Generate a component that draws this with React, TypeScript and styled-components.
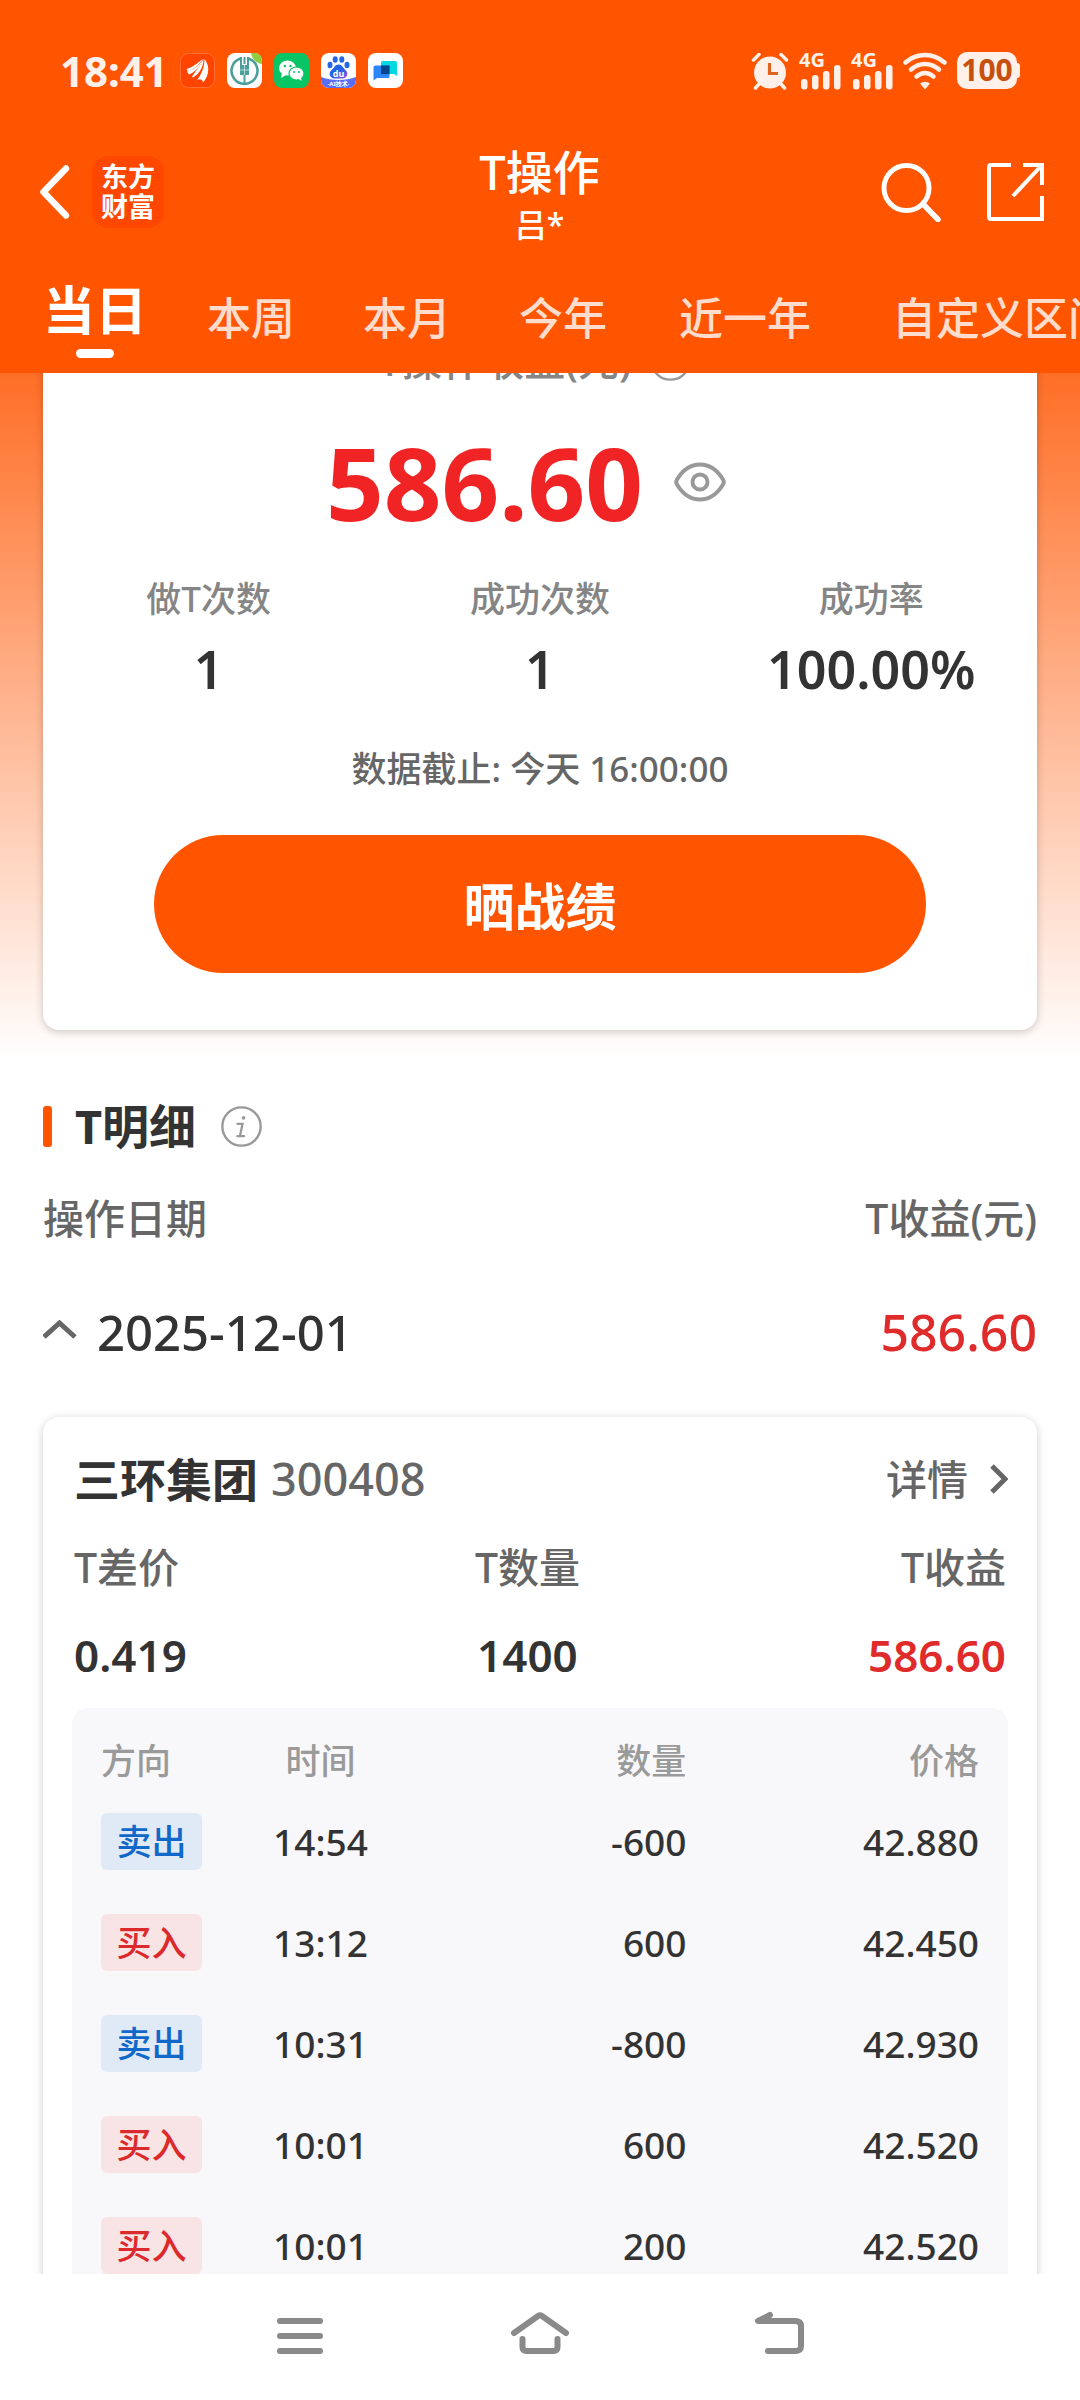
import React, { useLayoutEffect, useRef, useState } from "react";
import styled, { createGlobalStyle, css } from "styled-components";

const color = {
  brand: "#ff5500",
  ink: "#333333",
  mid: "#666666",
  soft: "#858585",
  faint: "#9a9a9a",
  rise: "#e02b2b",
  line: "#8a8a8a",
};

const GlobalStyle = createGlobalStyle`
  *, *::before, *::after { box-sizing: border-box; }
  body {
    margin: 0;
    background: #ffffff;
    color: ${color.ink};
    font-family: "Noto Sans", "Noto Sans CJK SC", sans-serif;
    font-weight: 500;
  }
  button {
    padding: 0;
    border: 0;
    background: none;
    color: inherit;
    font: inherit;
    cursor: pointer;
  }
  h1, h2, h3, p, dl, dd { margin: 0; font: inherit; }
  svg { display: block; flex: none; }
`;

const Screen = styled.div`
  display: flex;
  flex-direction: column;
  height: 100vh;
  overflow: hidden;
`;

/* ---------- header ---------- */

const Header = styled.header`
  flex: none;
  background: ${color.brand};
  color: #ffffff;
`;

const StatusBar = styled.div`
  display: flex;
  align-items: center;
  justify-content: space-between;
  height: 139px;
  padding: 2px 60px 0;
`;

const StatusGroup = styled.div<{ $gap: number }>`
  display: flex;
  align-items: center;
  gap: ${(p) => p.$gap}px;
`;

const Clock = styled.span`
  color: #fff1ea;
  font-size: 42px;
  font-weight: 700;
  line-height: 44px;
`;

const Battery = styled.span`
  position: relative;
  width: 60px;
  height: 37px;
  margin-right: 3px;
  border-radius: 10px;
  background: #fff1ea;
  color: #c8500f;
  font-size: 30px;
  font-weight: 700;
  line-height: 36px;
  text-align: center;

  &::after {
    content: "";
    position: absolute;
    top: 11px;
    right: -3px;
    width: 4px;
    height: 15px;
    border-radius: 0 3px 3px 0;
    background: #fff1ea;
  }
`;

const NavBar = styled.div`
  display: flex;
  align-items: center;
  padding: 0 35px 0 40px;
`;

const NavSide = styled.div<{ $end?: boolean }>`
  display: flex;
  flex: 1;
  align-items: center;
  justify-content: ${(p) => (p.$end ? "flex-end" : "flex-start")};
  gap: ${(p) => (p.$end ? 46 : 22)}px;
`;

const BrandMark = styled.span`
  display: grid;
  place-content: center;
  width: 72px;
  height: 72px;
  border-radius: 16px;
  background: #ff4700;
  font-size: 27px;
  font-weight: 700;
  line-height: 30px;
`;

const NavTitle = styled.div`
  margin-right: 6px;
  text-align: center;
`;

const Title = styled.h1`
  font-size: 47px;
  line-height: 66px;
`;

const Account = styled.p`
  font-size: 32px;
  line-height: 40px;
`;

const TabList = styled.nav`
  display: flex;
  align-items: flex-start;
  height: 128px;
  padding: 35px 0 0 43px;
  overflow: hidden;
`;

const Tab = styled.button<{ $active: boolean; $pad: number }>`
  flex: none;
  padding: 0 ${(p) => p.$pad}px;
  color: #ffdccb;
  font-size: 44px;
  line-height: 76px;
  white-space: nowrap;

  ${(p) =>
    p.$active &&
    css`
      padding: 0 26px 0 0;
      color: #ffffff;
      font-size: 52px;
      font-weight: 700;
      line-height: 60px;
    `}
`;

const TabLabel = styled.span<{ $active: boolean }>`
  display: flex;
  flex-direction: column;
  align-items: center;

  ${(p) =>
    p.$active &&
    css`
      &::after {
        content: "";
        width: 38px;
        height: 9px;
        margin-top: 9px;
        border-radius: 5px;
        background: #ffffff;
      }
    `}
`;

/* ---------- scrolling content ---------- */

const Content = styled.main`
  flex: 1;
  min-height: 0;
  overflow-y: auto;
  scrollbar-width: none;
`;

const Hero = styled.section`
  padding: 40px 43px 30px;
  background: linear-gradient(${color.brand}, #ffffff);
`;

const Card = styled.div`
  border-radius: 16px;
  background: #ffffff;
  box-shadow: 0 2px 8px rgba(0, 0, 0, 0.2);
`;

const SummaryCard = styled(Card)`
  padding: 39px 0 57px;
`;

const Caption = styled.div`
  display: flex;
  align-items: center;
  justify-content: center;
  gap: 18px;
  padding-right: 11px;
  color: ${color.soft};
  font-size: 41px;
  line-height: 56px;
`;

const Total = styled.div`
  display: flex;
  align-items: center;
  justify-content: center;
  gap: 31px;
  margin-top: 44px;
  padding-right: 28px;
  color: #f02424;
  font-size: 101px;
  font-weight: 700;
  line-height: 100px;
`;

const Stats = styled.dl`
  display: grid;
  grid-template-columns: repeat(3, 1fr);
  margin-top: 47px;
  text-align: center;
`;

const StatLabel = styled.dt`
  color: ${color.soft};
  font-size: 35px;
  line-height: 40px;
`;

const StatValue = styled.dd`
  margin-top: 20px;
  font-size: 52px;
  font-weight: 600;
  line-height: 60px;
`;

const AsOf = styled.p`
  margin-top: 50px;
  color: ${color.mid};
  font-size: 35px;
  line-height: 40px;
  text-align: center;
`;

const ShareButton = styled.button`
  display: block;
  width: calc(100% - 222px);
  height: 138px;
  margin: 46px auto 0;
  border-radius: 69px;
  background: ${color.brand};
  color: #ffffff;
  font-size: 51px;
  font-weight: 700;
`;

const Details = styled.section`
  padding: 36px 43px 100px;
`;

const SectionTitle = styled.div`
  display: flex;
  align-items: center;
  line-height: 60px;

  &::before {
    content: "";
    width: 9px;
    height: 41px;
    margin-right: 23px;
    border-radius: 3px;
    background: ${color.brand};
  }
`;

const SectionName = styled.h2`
  margin-right: 25px;
  font-size: 47px;
  font-weight: 700;
`;

const Row = styled.div<{ $top: number }>`
  display: flex;
  align-items: center;
  justify-content: space-between;
  width: 100%;
  margin-top: ${(p) => p.$top}px;
  line-height: 60px;
`;

const HeadText = styled.span`
  color: ${color.mid};
  font-size: 41px;
`;

const DayToggle = styled.button`
  display: flex;
  align-items: center;
  gap: 20px;
  font-size: 49px;
  line-height: 60px;
`;

const DayProfit = styled.span`
  color: ${color.rise};
  font-size: 50px;
`;

const StockCard = styled(Card)`
  margin-top: 55px;
  padding: 32px 29px;
  box-shadow: 0 2px 10px rgba(0, 0, 0, 0.2);
`;

const StockHead = styled.div`
  display: flex;
  align-items: center;
  padding-left: 2px;
  line-height: 60px;
`;

const StockName = styled.h3`
  font-size: 46px;
  font-weight: 700;
`;

const StockCode = styled.span`
  margin-left: 13px;
  color: ${color.mid};
  font-size: 45px;
`;

const DetailLink = styled.a`
  display: flex;
  align-items: center;
  gap: 22px;
  margin-left: auto;
  color: ${color.mid};
  font-size: 41px;
  text-decoration: none;
`;

const Metrics = styled.dl`
  display: flex;
  justify-content: space-between;
  margin-top: 28px;
  padding: 0 2px;
  line-height: 60px;
`;

const Metric = styled.div<{ $align: string }>`
  text-align: ${(p) => p.$align};
`;

const MetricLabel = styled.dt`
  color: ${color.mid};
  font-size: 41px;
`;

const MetricValue = styled.dd<{ $rise?: boolean }>`
  margin-top: 28px;
  color: ${(p) => (p.$rise ? color.rise : color.ink)};
  font-size: 44px;
  font-weight: 600;
`;

const Trades = styled.div`
  margin-top: 23px;
  padding: 22px 29px;
  border-radius: 16px;
  background: #f8f8fb;
`;

const TradeTable = styled.table`
  width: 100%;
  border-collapse: collapse;
  table-layout: fixed;
`;

const Col = styled.col<{ $width: string }>`
  width: ${(p) => p.$width};
`;

const Th = styled.th<{ $align: string }>`
  height: 61px;
  padding: 0;
  color: ${color.faint};
  font-size: 35px;
  font-weight: 500;
  line-height: 50px;
  text-align: ${(p) => p.$align};
`;

const Td = styled.td<{ $align: string }>`
  height: 101px;
  padding: 0;
  font-size: 37px;
  line-height: 50px;
  text-align: ${(p) => p.$align};
`;

const SideTag = styled.span<{ $sell: boolean }>`
  display: block;
  width: 101px;
  border-radius: 6px;
  background: ${(p) => (p.$sell ? "#e0eaf6" : "#f9e4e5")};
  color: ${(p) => (p.$sell ? "#1168c9" : "#dc2a2c")};
  font-size: 35px;
  line-height: 57px;
  text-align: center;
`;

/* ---------- system navigation ---------- */

const SystemBar = styled.footer`
  display: flex;
  flex: none;
  align-items: center;
  justify-content: center;
  gap: 180px;
  height: 126px;
  background: #ffffff;
`;

const SystemKey = styled.button`
  width: 60px;
  height: 60px;
`;

/* ---------- drawings ---------- */

const pale = "#fff1ea";

const FundIcon = () => (
  <svg width="35" height="35" viewBox="0 0 35 35" aria-hidden="true">
    <rect x="0.5" y="0.5" width="34" height="34" rx="8" fill="#ff4400" stroke="#ff7038" />
    <path d="M6.500 16C13 14.500 18 9.500 23 6 19 11 14 16.500 8 18.500Z" fill="#fff" />
    <path d="M12 23.500C16 18 20.500 12 23.500 6 23.500 13 20 20.500 13 24.500Z" fill="#fff" />
    <path d="M17 27C22 21 24.500 13 24.500 6 29.500 12 30 22 23 29.500 22.500 26 19.500 25.500 17 27Z" fill="#fff" />
    <path d="M7 18.500C14 17 19 12 23 6.500 19.500 14 15 19 9 21.500Z" fill="#fff" />
  </svg>
);

const BankIcon = () => (
  <svg width="35" height="35" viewBox="0 0 35 35" aria-hidden="true">
    <defs>
      <clipPath id="bank-tile">
        <rect width="35" height="35" rx="8" />
      </clipPath>
    </defs>
    <g clipPath="url(#bank-tile)">
      <rect width="35" height="35" fill="#fff" />
      <path d="M24 0H35V11C29 10 25 6 24 0Z" fill="#8fce3c" />
      <path d="M13.500 5.500A13 13 0 1 0 21.500 5.500" fill="none" stroke="#4c9f9b" strokeWidth="2.600" />
      <path d="M17.500 4V11M17.500 21V31M14 4V13M21 4V13" stroke="#4c9f9b" strokeWidth="2" />
      <rect x="13" y="12" width="9" height="10" fill="#4c9f9b" />
      <path d="M13 17H22M17.500 12V22" stroke="#cfe6e4" strokeWidth="0.800" />
    </g>
  </svg>
);

const ChatIcon = () => (
  <svg width="35" height="35" viewBox="0 0 35 35" aria-hidden="true">
    <rect width="35" height="35" rx="8" fill="#07c565" />
    <ellipse cx="13.500" cy="15" rx="8.500" ry="7.500" fill="#fff" />
    <path d="M8 20L7 25L12 22Z" fill="#fff" />
    <ellipse cx="22.500" cy="20.500" rx="7.500" ry="6.500" fill="#fff" stroke="#07c565" strokeWidth="1.200" />
    <path d="M24 25.500L27.500 28L27 24Z" fill="#fff" />
    <g fill="#07c565">
      <circle cx="10.800" cy="13" r="1.200" />
      <circle cx="16.500" cy="13" r="1.200" />
      <circle cx="20" cy="19" r="1" />
      <circle cx="25" cy="19" r="1" />
    </g>
  </svg>
);

const PawIcon = () => (
  <svg width="35" height="35" viewBox="0 0 35 35" aria-hidden="true">
    <defs>
      <clipPath id="paw-tile">
        <rect width="35" height="35" rx="8" />
      </clipPath>
      <linearGradient id="paw-pad" x1="0" y1="0" x2="1" y2="1">
        <stop offset="0.500" stopColor="#2563e8" />
        <stop offset="1" stopColor="#a04be0" />
      </linearGradient>
    </defs>
    <g clipPath="url(#paw-tile)">
      <rect width="35" height="35" fill="#fff" />
      <g fill="#2566e4">
        <ellipse cx="9" cy="12" rx="2.500" ry="3.200" />
        <ellipse cx="14.200" cy="6.500" rx="2.500" ry="3.300" />
        <ellipse cx="20.800" cy="6.500" rx="2.500" ry="3.300" />
        <ellipse cx="26" cy="12" rx="2.500" ry="3.200" />
      </g>
      <path d="M17.500 11.500C21 11.500 22 15 24.500 17 28 20 26 25.500 21.500 25.500H13.500C9 25.500 7 20 10.500 17 13 15 14 11.500 17.500 11.500Z" fill="url(#paw-pad)" />
      <path d="M0 24C10 28 25 28 35 24V35H0Z" fill="#5b6df5" />
      <text x="17.500" y="23.500" fill="#fff" fontSize="9" fontWeight="700" textAnchor="middle">du</text>
      <text x="17.500" y="33" fill="#fff" fontSize="6" fontWeight="700" textAnchor="middle">·AI技术·</text>
    </g>
  </svg>
);

const BubblesIcon = () => (
  <svg width="35" height="35" viewBox="0 0 35 35" aria-hidden="true">
    <rect width="35" height="35" rx="8" fill="#fff" />
    <path d="M15 8H27.500Q29 8 29 9.500V23L26 21H13V10Q13 8 15 8Z" fill="#00d8e0" />
    <path d="M7.500 12.500H21.500V23.500Q21.500 25 20 25H9L5.500 27.500V14.500Q5.500 12.500 7.500 12.500Z" fill="#2b86fb" />
    <rect x="13" y="12.500" width="8.500" height="8.500" fill="#02468f" />
  </svg>
);

const AlarmIcon = () => (
  <svg width="38" height="38" viewBox="0 0 38 38" aria-hidden="true">
    <circle cx="19" cy="20.500" r="16" fill={pale} />
    <path d="M2.500 8L8 2.500M35.500 8L30 2.500M8 32L4.500 36M30 32L33.500 36" stroke={pale} strokeWidth="3.500" strokeLinecap="round" />
    <path d="M18.500 11V21.500H27" fill="none" stroke="#e0631f" strokeWidth="3.200" />
  </svg>
);

const SignalIcon = () => (
  <svg width="42" height="54" viewBox="0 -8 42 54" aria-hidden="true">
    <text x="0" y="15" fill={pale} fontSize="20" fontWeight="700">4G</text>
    <g fill={pale}>
      <rect x="2" y="27" width="6.500" height="10.500" rx="3" />
      <rect x="13" y="23" width="6.500" height="14.500" rx="3" />
      <rect x="24" y="19" width="6.500" height="18.500" rx="3" />
      <rect x="35" y="13" width="6.500" height="24.500" rx="3" />
    </g>
  </svg>
);

const WifiIcon = () => (
  <svg width="44" height="38" viewBox="0 0 44 38" aria-hidden="true">
    <g fill="none" stroke={pale} strokeWidth="4.500" strokeLinecap="round">
      <path d="M2.500 10.500C14 0.500 30 0.500 41.500 10.500" />
      <path d="M8 17.500C16.500 10 27.500 10 36 17.500" />
      <path d="M13.500 24.500C19 20 25 20 30.500 24.500" />
    </g>
    <path d="M22 37.500L17 31.500Q22 28 27 31.500Z" fill={pale} />
  </svg>
);

const BackIcon = () => (
  <svg width="30" height="54" viewBox="0 0 30 54" aria-hidden="true">
    <path d="M26 3.500L3.500 27L26 50.500" fill="none" stroke="#fff" strokeWidth="6.500" strokeLinecap="round" strokeLinejoin="round" />
  </svg>
);

const SearchIcon = () => (
  <svg width="60" height="60" viewBox="0 0 60 60" aria-hidden="true">
    <circle cx="25.500" cy="26" r="22.500" fill="none" stroke="#fff" strokeWidth="5" />
    <path d="M42 42L57 57.500" stroke="#fff" strokeWidth="5.500" strokeLinecap="round" />
  </svg>
);

const ExportIcon = () => (
  <svg width="58" height="60" viewBox="0 0 58 60" aria-hidden="true">
    <path d="M24 3H4Q2 3 2 5V55Q2 57 4 57H55V34" fill="none" stroke="#fff" strokeWidth="4" />
    <path d="M36 3H55V23M55 3L26 34" fill="none" stroke="#fff" strokeWidth="4" />
  </svg>
);

const EyeIcon = () => (
  <svg width="52" height="40" viewBox="0 0 52 40" aria-hidden="true">
    <path d="M3 17.500C15 -2.500 37 -2.500 49 17.500Q50.500 20 49 22.500C37 42.500 15 42.500 3 22.500Q1.500 20 3 17.500Z" fill="none" stroke="#999" strokeWidth="4" />
    <circle cx="26" cy="20" r="7.500" fill="none" stroke="#999" strokeWidth="4" />
  </svg>
);

const InfoIcon = () => (
  <svg width="41" height="41" viewBox="0 0 40 40" aria-hidden="true">
    <circle cx="20" cy="20" r="18.700" fill="none" stroke="#999" strokeWidth="2.300" />
    <circle cx="22" cy="11.500" r="1.800" fill="#999" />
    <path d="M16 17.500H21L18.500 29M16 29.500H22.500" fill="none" stroke="#999" strokeWidth="2.200" strokeLinecap="round" />
  </svg>
);

const ChevronUp = () => (
  <svg width="34" height="24" viewBox="0 0 34 24" aria-hidden="true">
    <path d="M1 17L16.500 3L32 17" fill="none" stroke={color.mid} strokeWidth="5" />
  </svg>
);

const ChevronRight = () => (
  <svg width="18" height="30" viewBox="0 0 18 30" aria-hidden="true">
    <path d="M2 2L15 15L2 28" fill="none" stroke={color.mid} strokeWidth="5" />
  </svg>
);

const MenuKeyIcon = () => (
  <svg width="60" height="60" viewBox="0 0 60 60" aria-hidden="true">
    <path d="M10 14H50M10 29H50M10 44H50" stroke={color.line} strokeWidth="6" strokeLinecap="round" />
  </svg>
);

const HomeKeyIcon = () => (
  <svg width="60" height="60" viewBox="0 0 60 60" aria-hidden="true">
    <path d="M4 26L28 9Q30 7.500 32 9L56 26M12.500 32V40Q12.500 44 16.500 44H43.500Q47.500 44 47.500 40V32" fill="none" stroke={color.line} strokeWidth="6" strokeLinecap="round" strokeLinejoin="round" />
  </svg>
);

const BackKeyIcon = () => (
  <svg width="60" height="60" viewBox="0 0 60 60" aria-hidden="true">
    <path d="M20 8L8 14H45Q51 14 51 19V39Q51 44 45 44H18" fill="none" stroke={color.line} strokeWidth="6" strokeLinecap="round" strokeLinejoin="round" />
  </svg>
);

/* ---------- data ---------- */

const tabs = [
  { label: "当日", pad: 34 },
  { label: "本周", pad: 34 },
  { label: "本月", pad: 34 },
  { label: "今年", pad: 34 },
  { label: "近一年", pad: 38 },
  { label: "自定义区间", pad: 43 },
];

const stats = [
  { label: "做T次数", value: "1" },
  { label: "成功次数", value: "1" },
  { label: "成功率", value: "100.00%" },
];

const metrics = [
  { label: "T差价", value: "0.419", align: "left", rise: false },
  { label: "T数量", value: "1400", align: "center", rise: false },
  { label: "T收益", value: "586.60", align: "right", rise: true },
];

const columns = [
  { label: "方向", width: "15%", align: "left" },
  { label: "时间", width: "20%", align: "center" },
  { label: "数量", width: "auto", align: "right" },
  { label: "价格", width: "33.33%", align: "right" },
];

const trades = [
  { side: "卖出", time: "14:54", amount: "-600", price: "42.880" },
  { side: "买入", time: "13:12", amount: "600", price: "42.450" },
  { side: "卖出", time: "10:31", amount: "-800", price: "42.930" },
  { side: "买入", time: "10:01", amount: "600", price: "42.520" },
  { side: "买入", time: "10:01", amount: "200", price: "42.520" },
];

const INITIAL_SCROLL = 120;

export default function App() {
  const contentRef = useRef<HTMLElement>(null);
  const [active, setActive] = useState("当日");
  const [open, setOpen] = useState(true);

  useLayoutEffect(() => {
    if (contentRef.current) contentRef.current.scrollTop = INITIAL_SCROLL;
  }, []);

  return (
    <Screen>
      <GlobalStyle />
      <Header>
        <StatusBar>
          <StatusGroup $gap={12}>
            <Clock>18:41</Clock>
            <FundIcon />
            <BankIcon />
            <ChatIcon />
            <PawIcon />
            <BubblesIcon />
          </StatusGroup>
          <StatusGroup $gap={10}>
            <AlarmIcon />
            <SignalIcon />
            <SignalIcon />
            <WifiIcon />
            <Battery>100</Battery>
          </StatusGroup>
        </StatusBar>
        <NavBar>
          <NavSide>
            <button aria-label="返回">
              <BackIcon />
            </button>
            <BrandMark>
              <span>东方</span>
              <span>财富</span>
            </BrandMark>
          </NavSide>
          <NavTitle>
            <Title>T操作</Title>
            <Account>吕*</Account>
          </NavTitle>
          <NavSide $end>
            <button aria-label="搜索">
              <SearchIcon />
            </button>
            <button aria-label="分享">
              <ExportIcon />
            </button>
          </NavSide>
        </NavBar>
        <TabList>
          {tabs.map((tab) => (
            <Tab
              key={tab.label}
              $active={tab.label === active}
              $pad={tab.pad}
              onClick={() => setActive(tab.label)}
            >
              <TabLabel $active={tab.label === active}>{tab.label}</TabLabel>
            </Tab>
          ))}
        </TabList>
      </Header>

      <Content ref={contentRef}>
        <Hero>
          <SummaryCard>
            <Caption>
              <span>T操作收益(元)</span>
              <InfoIcon />
            </Caption>
            <Total>
              <span>586.60</span>
              <button aria-label="隐藏金额">
                <EyeIcon />
              </button>
            </Total>
            <Stats>
              {stats.map((stat) => (
                <div key={stat.label}>
                  <StatLabel>{stat.label}</StatLabel>
                  <StatValue>{stat.value}</StatValue>
                </div>
              ))}
            </Stats>
            <AsOf>数据截止: 今天 16:00:00</AsOf>
            <ShareButton>晒战绩</ShareButton>
          </SummaryCard>
        </Hero>

        <Details>
          <SectionTitle>
            <SectionName>T明细</SectionName>
            <button aria-label="说明">
              <InfoIcon />
            </button>
          </SectionTitle>
          <Row $top={32}>
            <HeadText>操作日期</HeadText>
            <HeadText>T收益(元)</HeadText>
          </Row>
          <Row $top={54}>
            <DayToggle aria-expanded={open} onClick={() => setOpen(!open)}>
              <ChevronUp />
              2025-12-01
            </DayToggle>
            <DayProfit>586.60</DayProfit>
          </Row>

          {open && (
            <StockCard>
              <StockHead>
                <StockName>三环集团</StockName>
                <StockCode>300408</StockCode>
                <DetailLink href="#detail">
                  详情
                  <ChevronRight />
                </DetailLink>
              </StockHead>
              <Metrics>
                {metrics.map((metric) => (
                  <Metric key={metric.label} $align={metric.align}>
                    <MetricLabel>{metric.label}</MetricLabel>
                    <MetricValue $rise={metric.rise}>{metric.value}</MetricValue>
                  </Metric>
                ))}
              </Metrics>
              <Trades>
                <TradeTable>
                  <colgroup>
                    {columns.map((column) => (
                      <Col key={column.label} $width={column.width} />
                    ))}
                  </colgroup>
                  <thead>
                    <tr>
                      {columns.map((column) => (
                        <Th key={column.label} $align={column.align}>
                          {column.label}
                        </Th>
                      ))}
                    </tr>
                  </thead>
                  <tbody>
                    {trades.map((trade, index) => (
                      <tr key={index}>
                        <Td $align="left">
                          <SideTag $sell={trade.side === "卖出"}>{trade.side}</SideTag>
                        </Td>
                        <Td $align="center">{trade.time}</Td>
                        <Td $align="right">{trade.amount}</Td>
                        <Td $align="right">{trade.price}</Td>
                      </tr>
                    ))}
                  </tbody>
                </TradeTable>
              </Trades>
            </StockCard>
          )}
        </Details>
      </Content>

      <SystemBar>
        <SystemKey aria-label="最近任务">
          <MenuKeyIcon />
        </SystemKey>
        <SystemKey aria-label="主屏幕">
          <HomeKeyIcon />
        </SystemKey>
        <SystemKey aria-label="返回上一页">
          <BackKeyIcon />
        </SystemKey>
      </SystemBar>
    </Screen>
  );
}
